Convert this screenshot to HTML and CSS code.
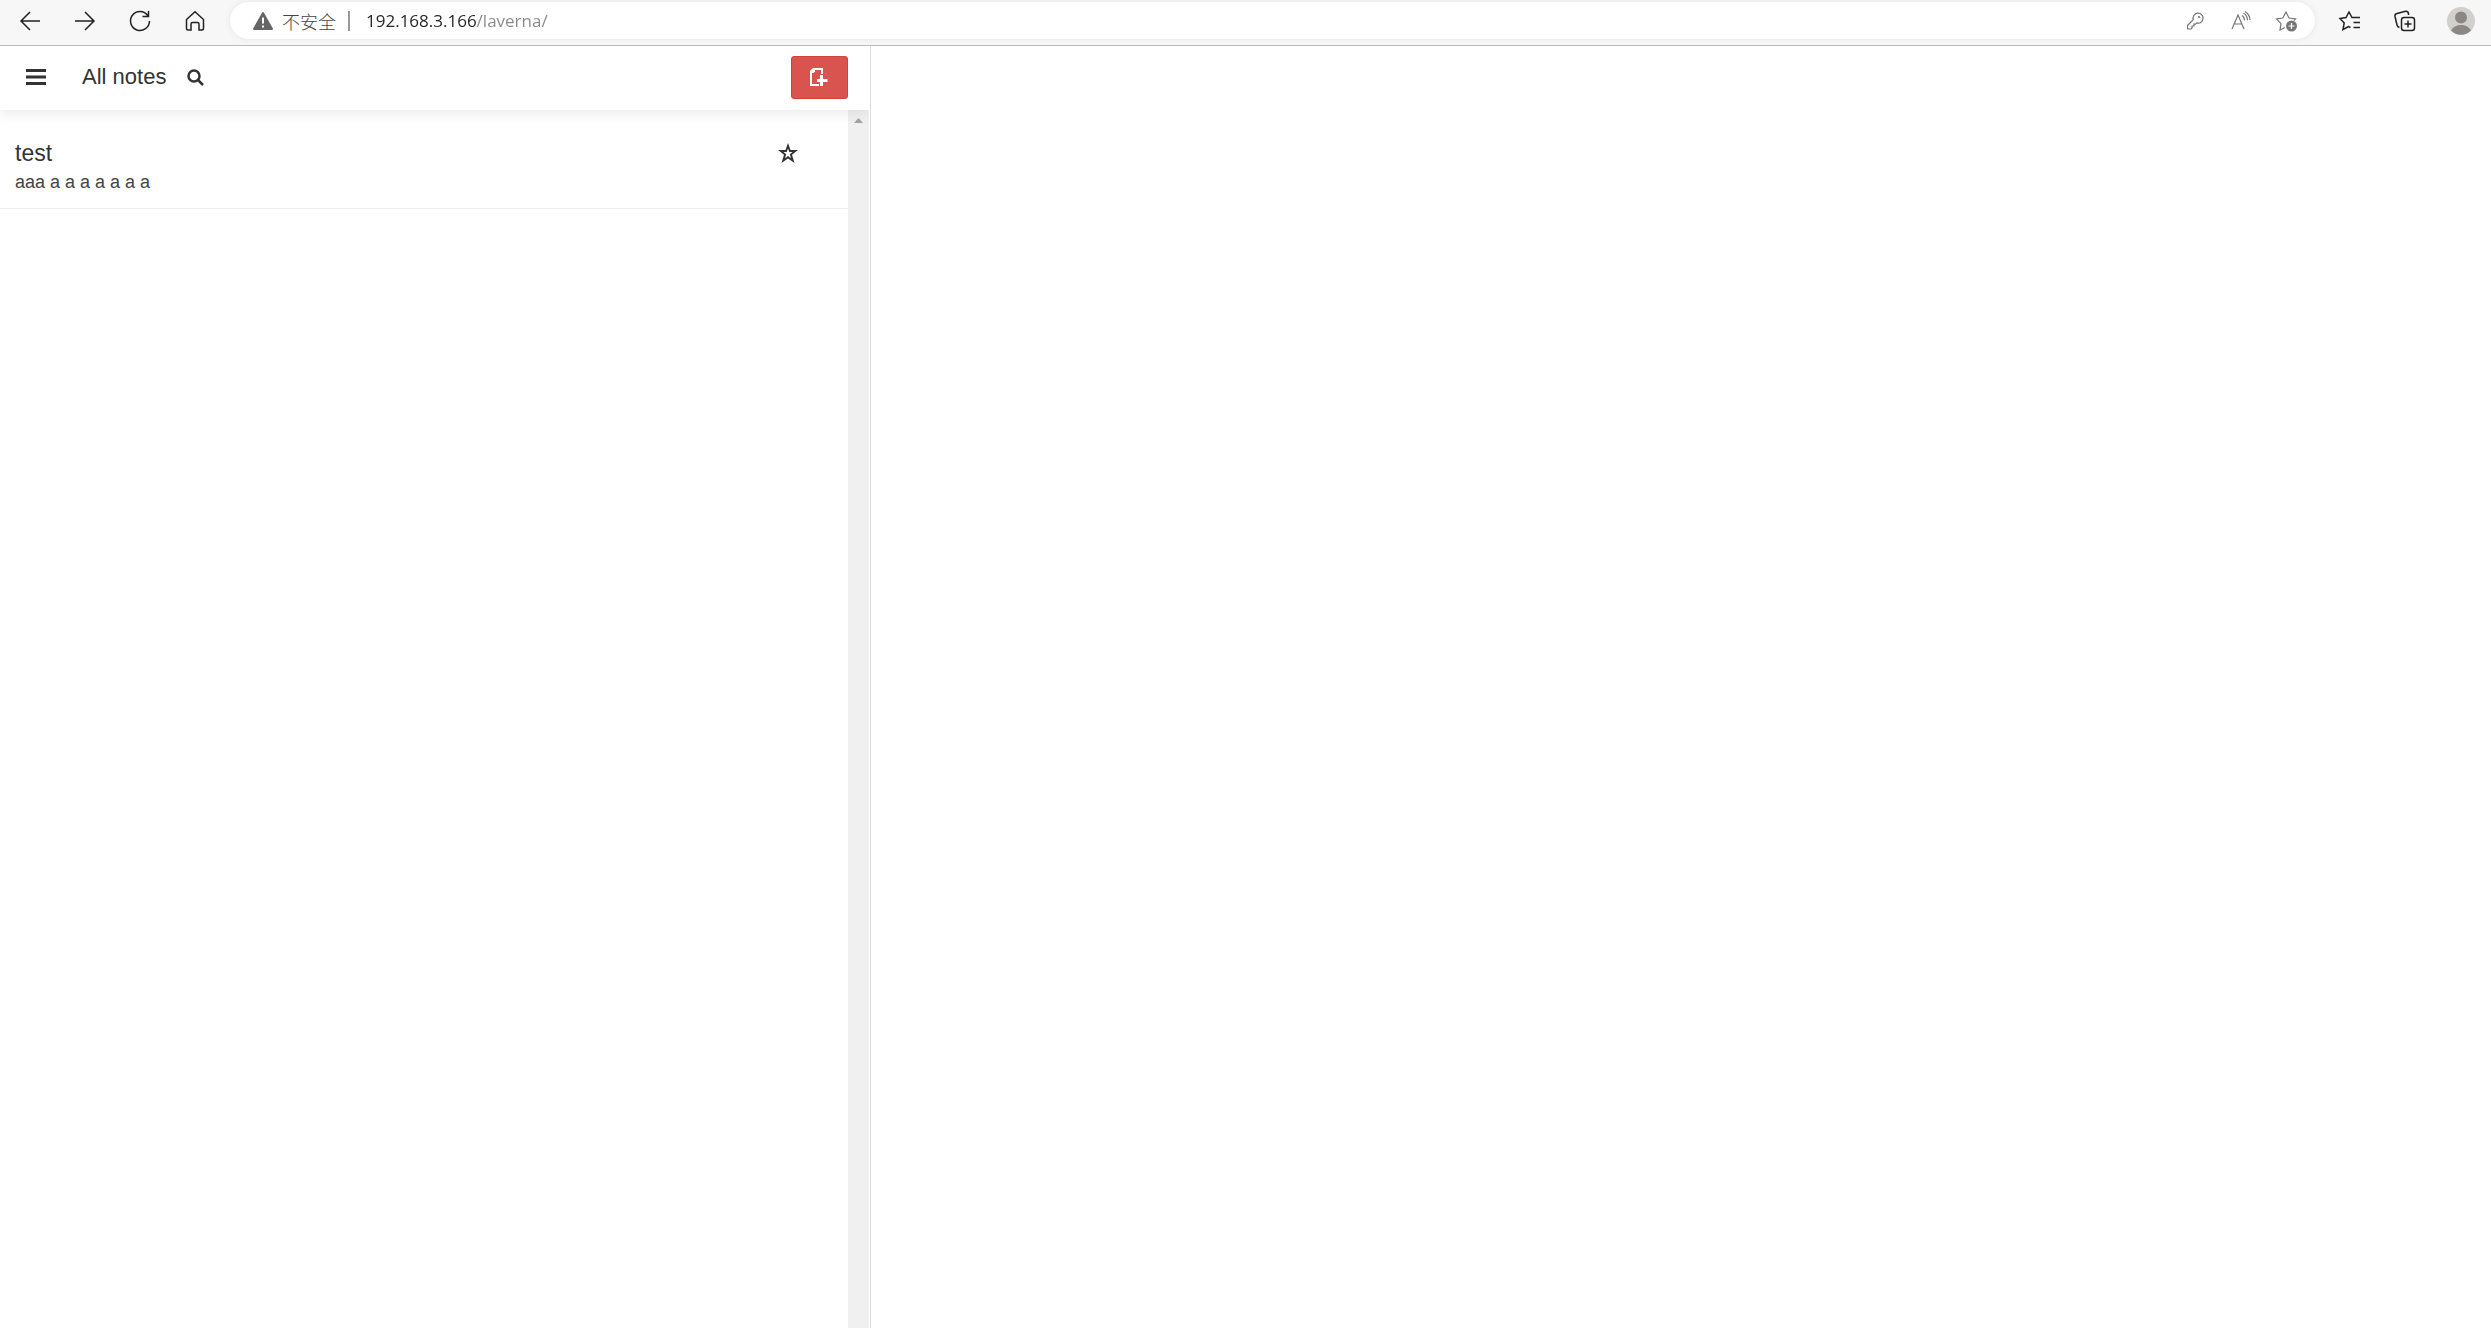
FILE: index.html
```html
<!DOCTYPE html>
<html lang="en">
<head>
    <meta charset="UTF-8">
    <meta name="viewport" content="width=device-width, initial-scale=1.0">
    <title>Laverna</title>
    <link rel="stylesheet" href="styles.css">
</head>
<body>
    <div class="toolbar">
        <button class="tool" aria-label="Back">
            <svg width="24" height="24" viewBox="0 0 24 24"><path d="M22 12H3M12 3L3 12l9 9"/></svg>
        </button>
        <button class="tool" aria-label="Forward">
            <svg width="24" height="24" viewBox="0 0 24 24"><path d="M2 12h19M12 3l9 9-9 9"/></svg>
        </button>
        <button class="tool" aria-label="Reload">
            <svg width="24" height="24" viewBox="0 0 24 24"><path d="M19.800 6.500A9.500 9.500 0 1 0 21.500 12M20.500 2v5.500h-6"/></svg>
        </button>
        <button class="tool" aria-label="Home">
            <svg width="24" height="24" viewBox="0 0 24 24"><path d="M3.500 10.500L12 2.800l8.500 7.700v9q0 1.500-1.500 1.500h-3v-6q0-1.500-1.500-1.500h-5Q8 13.500 8 15v6H5q-1.500 0-1.500-1.500z"/></svg>
        </button>

        <div class="address">
            <svg class="warn" width="22" height="20" viewBox="0 0 22 20">
                <path d="M11 2L20 18H2z" fill="#666" stroke="#666" stroke-width="2" stroke-linejoin="round"/>
                <path d="M11 6.500v6M11 14.500v2" stroke="#fff" stroke-width="2"/>
            </svg>
            <label class="insecure" for="url">不安全</label>
            <span class="divider"></span>
            <input class="url" id="url" type="text" value="192.168.3.166/laverna/">
            <button class="tool small" aria-label="Passwords">
                <svg width="20" height="20" viewBox="0 0 20 20"><path d="M2.500 14.500l5.800-5.800A5 5 0 1 1 11.800 12l-1.300 1.200H9v1.800H7v2l-1 1H3.500q-1 0-1-1z"/><circle cx="14" cy="6" r=".5"/></svg>
            </button>
            <button class="tool small" aria-label="Read aloud">
                <svg width="20" height="20" viewBox="0 0 20 20"><path d="M1 18L7 4l6 14M3.200 13h7.600M11 4.500q2.500 1.500 2.500 5M12.500 2.300q3.800 2 4 7M14 .5q4.800 3 5 8.500"/></svg>
            </button>
            <button class="tool small" aria-label="Add to favorites">
                <svg width="24" height="24" viewBox="0 0 24 24"><path d="M10 18.500L5 21l1-6.300L1.500 10l6.300-1L11 3l3 6 6.500 1-1.500 1.500"/><circle cx="16.500" cy="17" r="5.500" fill="#757575" stroke="none"/><path d="M16.500 14v6M13.500 17h6" stroke="#fff"/></svg>
            </button>
        </div>

        <button class="tool" aria-label="Favorites">
            <svg width="24" height="24" viewBox="0 0 24 24"><path d="M12.500 18.500L10.500 17.500 5 20.500l1.200-6.500L2 9.500 8 8.500 11 3l3 5.500h8M15.500 13.500H22M15.500 18.500H22"/></svg>
        </button>
        <button class="tool" aria-label="Collections">
            <svg width="24" height="24" viewBox="0 0 24 24"><rect x="8.500" y="8.500" width="13" height="13" rx="2.500"/><path d="M15 11.500v7M11.500 15h7M6.500 18.500Q4.500 18 4 16L2 7.500Q1.500 5 4 4.500L12.500 2.300Q15 2 15.500 4.500V6"/></svg>
        </button>
        <button class="tool profile" aria-label="Profile">
            <svg width="28" height="28" viewBox="0 0 28 28">
                <circle cx="14" cy="14" r="14" fill="#d2d0cd"/>
                <circle cx="14" cy="10.500" r="6" fill="#8a8785"/>
                <path d="M4 23.500Q7 18 14 18t10 5.500A14 14 0 0 1 4 23.500z" fill="#8a8785"/>
            </svg>
        </button>
    </div>

    <div class="app">
        <aside class="sidebar">
            <header class="header">
                <button class="icon-btn" aria-label="Menu">
                    <svg width="20" height="16" viewBox="0 0 20 16"><path d="M0 0h20v3H0zM0 6.500h20v3H0zM0 13h20v3H0z" fill="#333"/></svg>
                </button>
                <h1 class="heading">All notes</h1>
                <button class="icon-btn" aria-label="Search">
                    <svg width="17" height="17" viewBox="0 0 17 17"><circle cx="7" cy="7" r="5.500" fill="none" stroke="#333" stroke-width="2.500"/><path d="M11 11l5 5" stroke="#333" stroke-width="2.500"/></svg>
                </button>
                <button class="new-note" aria-label="New note">
                    <svg width="18" height="18" viewBox="0 0 18 18"><path d="M9 17H1V4l3-3h8v5" fill="none" stroke="#fff" stroke-width="2"/><path d="M0 5V3l3-3h2v3.500L3.500 5z" fill="#fff"/><path d="M11.500 7v11M7 12.500h10.500" stroke="#fff" stroke-width="3"/></svg>
                </button>
            </header>
            <div class="list-wrap">
                <ul class="list">
                    <li class="note">
                        <div class="note-text">
                            <a class="note-title" href="#">test</a>
                            <p class="note-body">aaa a a a a a a a</p>
                        </div>
                        <button class="icon-btn" aria-label="Favorite">
                            <svg width="20" height="20" viewBox="0 0 20 20"><path fill="#333" fill-rule="evenodd" d="M10 0l2.500 7H20l-6 4.700 2.500 8.300-6.500-4.500L3.500 20 6 11.700 0 7h7.500zM10 5.500L8.700 9H5.500l2.700 2.200-1.200 4 3-2.200 3 2.200-1.200-4L14.500 9h-3.200z"/></svg>
                        </button>
                    </li>
                </ul>
                <div class="scrollbar">
                    <svg width="9" height="5" viewBox="0 0 9 5"><path d="M0 5L4.500 0 9 5z" fill="#a3a3a3"/></svg>
                </div>
            </div>
        </aside>
        <main class="content"></main>
    </div>
</body>
</html>
```
FILE: styles.css
```css
* {
    margin: 0;
    padding: 0;
    box-sizing: border-box;
}

body {
    height: 100vh;
    display: flex;
    flex-direction: column;
    background: #fff;
    color: #333;
    font-family: "Liberation Sans", Arial, sans-serif;
}

button {
    border: none;
    background: none;
    cursor: pointer;
}

svg {
    display: block;
}

/* Browser bar */
.toolbar {
    display: flex;
    align-items: flex-start;
    height: 46px;
    padding: 2px 1px 0 2px;
    background: #f7f7f7;
    border-bottom: 1px solid #bbb;
}

.tool {
    display: flex;
    justify-content: center;
    align-items: center;
    width: 55px;
    height: 37px;
    fill: none;
    stroke: #222;
    stroke-width: 1.5;
}

.small {
    width: 46px;
    stroke: #757575;
    stroke-width: 1.2;
}

.profile {
    width: 58px;
    stroke: none;
}

.address {
    flex: 1;
    display: flex;
    align-items: center;
    height: 37px;
    margin: 0 7px 0 8px;
    padding: 0 5px 0 22px;
    background: #fff;
    border-radius: 19px;
    box-shadow: 0 0 6px rgba(0, 0, 0, 0.08);
    font-family: "Open Sans", "Noto Sans CJK SC", sans-serif;
}

.insecure {
    margin-left: 8px;
    font-size: 18px;
    font-weight: 300;
    color: #444;
}

.divider {
    width: 2px;
    height: 20px;
    margin: 0 16px 0 12px;
    background: #999;
}

/* host part is darker than the path */
.url {
    flex: 1;
    border: none;
    outline: none;
    font: inherit;
    font-size: 17px;
    color: transparent;
    background: linear-gradient(to right, #222 111px, #888 111px);
    -webkit-background-clip: text;
    background-clip: text;
}

/* Notes app */
.app {
    flex: 1;
    display: flex;
    min-height: 0;
}

.sidebar {
    display: flex;
    flex-direction: column;
    width: calc(35% - 1px);
    padding-right: 1px;
    border-right: 1px solid #ddd;
}

.header {
    display: flex;
    align-items: center;
    height: 64px;
    padding: 0 21px 2px 26px;
    box-shadow: 0 4px 12px rgba(0, 0, 0, 0.08);
    clip-path: inset(0 0 -20px 0);
    z-index: 1;
}

.heading {
    margin: 0 21px 0 36px;
    font-size: 22px;
    font-weight: normal;
}

.new-note {
    display: flex;
    justify-content: center;
    align-items: center;
    width: 57px;
    height: 43px;
    margin-left: auto;
    background: #d9534f;
    border: 1px solid #d43f3a;
    border-radius: 3px;
}

.list-wrap {
    flex: 1;
    display: flex;
}

.list {
    flex: 1;
    list-style: none;
}

.note {
    display: flex;
    justify-content: space-between;
    padding: 28px 50px 12px 15px;
    border-bottom: 1px solid #eee;
}

.note-title {
    display: block;
    font-size: 23px;
    line-height: 30px;
    color: #333;
    text-decoration: none;
}

.note-body {
    font-size: 18px;
    line-height: 28px;
    color: #444;
}

.note .icon-btn {
    height: 30px;
}

.scrollbar {
    display: flex;
    justify-content: center;
    width: 21px;
    padding-top: 8px;
    background: #f0f0f0;
}

.content {
    flex: 1;
}
```
